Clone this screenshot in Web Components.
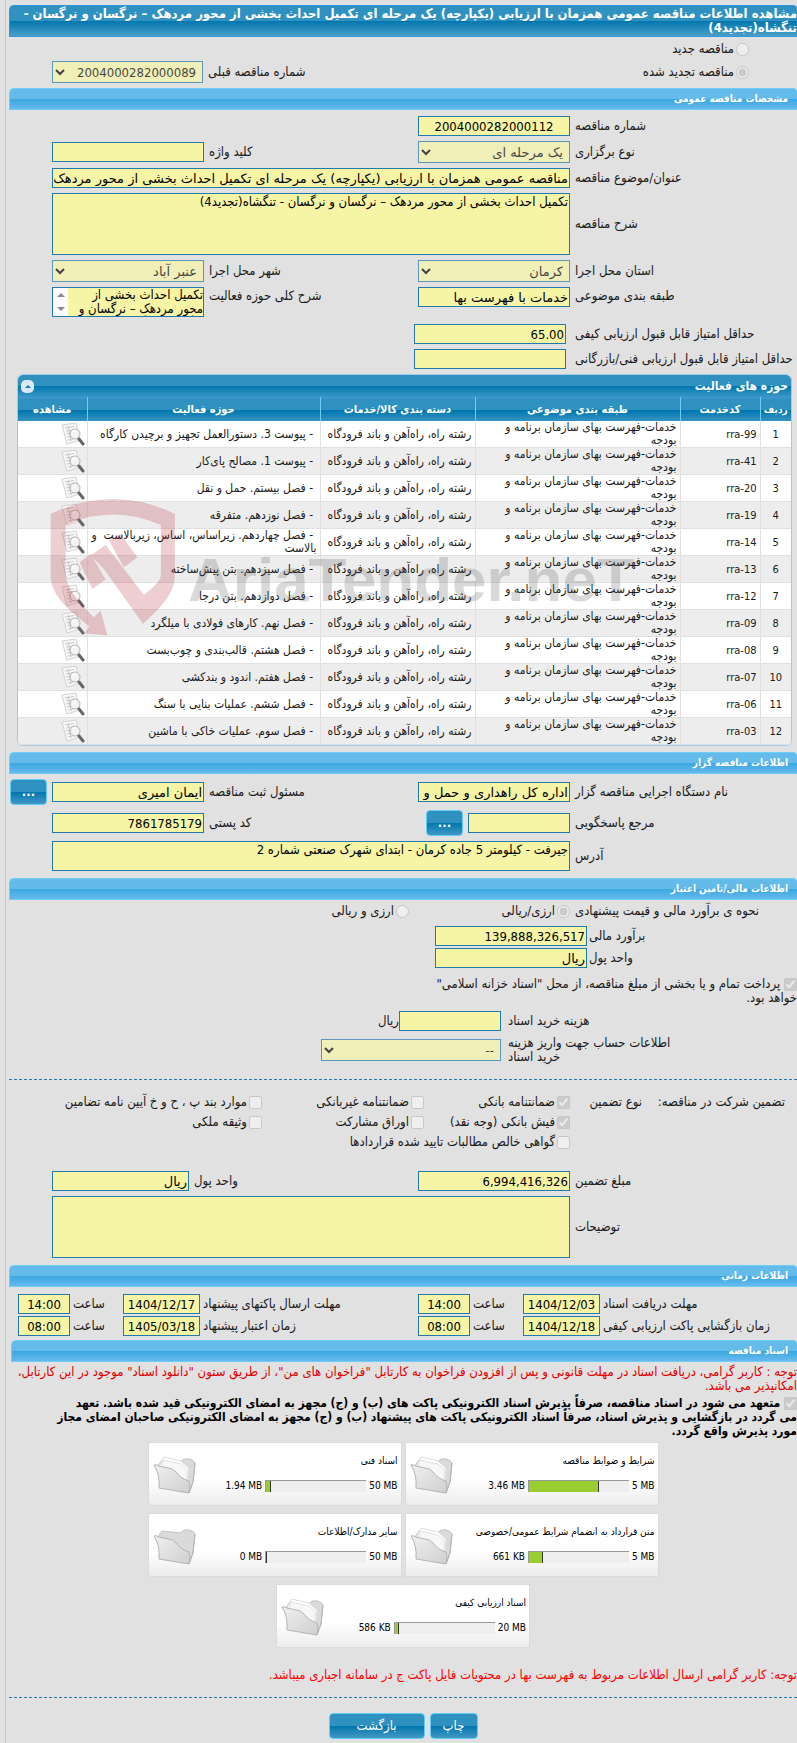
<!DOCTYPE html>
<html lang="fa" dir="rtl">
<head>
<meta charset="utf-8">
<title>مشاهده اطلاعات مناقصه عمومی</title>
<style>
  body {
    margin: 0;
    background: #e1e1e1;
    color: #1a1a1a;
    font: 13px/14px "DejaVu Sans Condensed", "DejaVu Sans", sans-serif;
  }
</style>
</head>
<body>
<tender-page></tender-page>

<script>
const controlStyles = /* css */`
  * { box-sizing: border-box; }
  input:not([type=radio]):not([type=checkbox]), select, textarea {
    width: 100%;
    margin: 0;
    font-family: inherit;
    font-size: 13px;
    color: #000;
    background: #f6f5a6;
    border: 1px solid #2279ac;
    border-radius: 0;
    outline: none;
  }
  input:not([type=radio]):not([type=checkbox]) { height: 20px; padding: 1px; }
  select { height: 22px; padding: 0 2px; }
  select:disabled { opacity: 0.7; }
  textarea {
    display: block;
    padding: 1px;
    line-height: 14px;
    resize: none;
    overflow: hidden;
  }
  label { text-align: end; align-self: center; }
`;

/* ── Section header ── */
class SectionBar extends HTMLElement {
  constructor() {
    super();
    this.attachShadow({ mode: "open" });
  }

  connectedCallback() {
    this.shadowRoot.innerHTML = /* html */`
      <style>
        :host {
          display: block;
          box-sizing: border-box;
          color: #fff;
          font-weight: bold;
          font-size: 10px;
          line-height: 20px;
          padding-right: 9px;
          border: 1px solid #6dcff6;
          border-right: 0;
          border-radius: 5px 4px 0 0;
          background: linear-gradient(#64bbea 50%, #3aa7e1 50%, #66b9ec);
        }
        :host([main]) {
          font-size: 13px;
          line-height: 14px;
          padding: 1px 0;
          border-color: #2f95df;
          background: linear-gradient(#2f91c0 50%, #0076ae 50%, #4c9fc9);
        }
        h1, h2 { margin: 0; font: inherit; }
      </style>
      ${this.hasAttribute("main") ? "<h1><slot></slot></h1>" : "<h2><slot></slot></h2>"}
    `;
  }
}

/* ── Grid that label and control cells fall into ── */
class FormGrid extends HTMLElement {
  constructor() {
    super();
    this.attachShadow({ mode: "open" });
  }

  connectedCallback() {
    this.shadowRoot.innerHTML = /* html */`
      <style>
        :host {
          display: grid;
          grid-template-columns: var(--cols, 222fr 152fr 204fr 152fr 38fr);
          gap: 5px;
          align-items: center;
        }
      </style>
      <slot></slot>
    `;
  }
}

/* ── Label + control; takes two cells of the grid around it ── */
class FormField extends HTMLElement {
  constructor() {
    super();
    this.attachShadow({ mode: "open" });
  }

  connectedCallback() {
    this.shadowRoot.innerHTML = /* html */`
      <style>
        ${controlStyles}
        :host { display: contents; }
        label { grid-column-start: var(--start, auto); }
        :host([top]) label, :host([top]) .control { align-self: start; }
        :host([top]) label { padding-top: 2px; }
        .control { grid-column: span var(--span, 1); min-width: 0; }
        .words { font-family: "DejaVu Sans", sans-serif; }
        input { text-align: ${this.getAttribute("align") || "start"}; }
        textarea { height: var(--height, 62px); }
        .scroll { display: flex; flex-direction: row; border: 1px solid #2279ac; }
        .scroll textarea { border: 0; height: 28px; flex: 1; padding: 0; }
        .arrows {
          display: flex;
          flex-direction: column;
          align-items: center;
          justify-content: space-between;
          width: 15px;
          padding: 5px 0;
          background: #fcfcfc;
        }
        .arrows i { border: 4px solid transparent; border-top-width: 0; border-bottom-color: #8b8b8b; }
        .arrows i + i { transform: rotate(180deg); }
      </style>
      <label for="c">${this.getAttribute("label")}</label>
      ${this.control()}
    `;
  }

  control() {
    const value = this.getAttribute("value") || "";
    const words = /^[\d:,./]*$/.test(value) ? "" : "words";
    switch (this.getAttribute("kind")) {
      case "select":
        return `<div class="control ${words}"><select id="c" disabled><option>${value}</option></select></div>`;
      case "area":
        return `<div class="control"><textarea id="c" readonly>${value}</textarea></div>`;
      case "scroll":
        return `<div class="control scroll"><textarea id="c" readonly>${value}</textarea><span class="arrows"><i></i><i></i></span></div>`;
      default:
        return `<div class="control ${words}"><input id="c" type="text" readonly value="${value}"></div>`;
    }
  }
}

/* ── Radio or tick box with its label ── */
class ChoiceOption extends HTMLElement {
  constructor() {
    super();
    this.attachShadow({ mode: "open" });
  }

  connectedCallback() {
    const type = this.getAttribute("type") || "checkbox";
    const checked = this.hasAttribute("checked") ? "checked" : "";
    this.shadowRoot.innerHTML = /* html */`
      <style>
        :host { display: flex; align-items: center; gap: 2px; }
        input { width: 13px; height: 13px; margin: 0; flex: none; }
        :host([block]) { display: block; }
        :host([block]) input { vertical-align: -3px; }
      </style>
      <input id="c" type="${type}" disabled ${checked}>
      <label for="c"><slot></slot></label>
    `;
  }
}

/* ── Blue button ── */
class BlueButton extends HTMLElement {
  constructor() {
    super();
    this.attachShadow({ mode: "open" });
  }

  connectedCallback() {
    this.shadowRoot.innerHTML = /* html */`
      <style>
        :host { display: inline-block; }
        button {
          display: block;
          width: 100%;
          height: 26px;
          padding: 0 12px;
          color: #fff;
          font: inherit;
          border: 1px solid #5fcdf5;
          border-radius: 4px;
          background: linear-gradient(#2f91c0 50%, #0076ae 50%, #4398c4);
        }
        :host([dots]) button { font-weight: bold; padding: 0; }
      </style>
      <button type="button"><slot></slot></button>
    `;
  }
}

/* ── Activity table ── */
const activities = [
  ["rra-99", "پیوست 3. دستورالعمل تجهیز و برچیدن کارگاه"],
  ["rra-41", "پیوست 1. مصالح پای‌کار"],
  ["rra-20", "فصل بیستم. حمل و نقل"],
  ["rra-19", "فصل نوزدهم. متفرقه"],
  ["rra-14", "فصل چهاردهم. زیراساس، اساس، زیربالاست &nbsp;و بالاست"],
  ["rra-13", "فصل سیزدهم. بتن پیش‌ساخته"],
  ["rra-12", "فصل دوازدهم. بتن درجا"],
  ["rra-09", "فصل نهم. کارهای فولادی با میلگرد"],
  ["rra-08", "فصل هشتم. قالب‌بندی و چوب‌بست"],
  ["rra-07", "فصل هفتم. اندود و بندکشی"],
  ["rra-06", "فصل ششم. عملیات بنایی با سنگ"],
  ["rra-03", "فصل سوم. عملیات خاکی با ماشین"],
];

const lensIcon = /* html */`
  <svg width="24" height="24" viewBox="0 0 24 24">
    <path d="M1 3 15 1l4 17-13 4Z" fill="#f8f8f8" stroke="#d2d2d2"/>
    <path d="m4 6 9-1.500M5 9l8-1.500M5 12l6-1M6 15l5-1M7 18l5-1M7 4l3 15" stroke="#c8c8c8" fill="none"/>
    <circle cx="14" cy="12" r="5" fill="#f2f2f2" fill-opacity=".8" stroke="#b5b5b5"/>
    <path d="M11 11q1-3 4-2" stroke="#fff" fill="none"/>
    <path d="m18 17 4 5" stroke="#666" stroke-width="3" stroke-linecap="round"/>
  </svg>`;

class ActivityTable extends HTMLElement {
  constructor() {
    super();
    this.attachShadow({ mode: "open" });
  }

  connectedCallback() {
    this.shadowRoot.innerHTML = /* html */`
      <style>
        :host {
          display: block;
          position: relative;
          border: 1px solid #a3c9e6;
          border-radius: 6px;
          overflow: hidden;
          background: #fff;
          font-size: 12px;
          line-height: 13px;
        }
        .title {
          display: flex;
          justify-content: space-between;
          align-items: center;
          height: 22px;
          padding: 0 3px;
          color: #fff;
          font-weight: bold;
          background: linear-gradient(#2f91c0 50%, #0076ae 50%, #3b97c5);
        }
        .fold {
          width: 13px;
          height: 13px;
          padding: 0;
          border: 0;
          border-radius: 5px;
          background: #dbe8f5;
          display: grid;
          place-items: center;
        }
        .fold i { border: 3px solid transparent; border-top: 0; border-bottom-color: #1a7ab0; }
        table {
          width: 100%;
          border-collapse: collapse;
          table-layout: fixed;
        }
        th {
          height: 23px;
          padding: 0;
          color: #fff;
          border-left: 1px solid #6dcff6;
          font-size: 11px;
          white-space: nowrap;
        }
        th:first-child { font-size: 10px; }
        thead tr {
          background: linear-gradient(#2f91c0 50%, #0076ae 50%, #3b97c5);
          border-top: 1px solid #3d94d8;
        }
        td {
          height: 26px;
          padding: 0 3px;
          border-left: 1px solid #e0e0e0;
          border-bottom: 1px solid #e0e0e0;
        }
        th:last-child, td:last-child { border-left: 0; }
        tbody tr:nth-child(even) { background: #ededed; }
        td:nth-child(-n+2) { font-size: 11px; }
        td:first-child { text-align: center; }
        td:nth-child(3) { padding-left: 16px; }
        td:last-child { padding: 0 2px; }
        .look { display: block; padding: 0; border: 0; background: none; height: 24px; }
        .mark {
          position: absolute;
          left: 32px;
          top: 122px;
          opacity: 0.22;
          pointer-events: none;
        }
      </style>
      <div class="title">
        <span>حوزه های فعالیت</span>
        <button class="fold" type="button" aria-label="بستن"><i></i></button>
      </div>
      <table>
        <colgroup>
          <col style="width:31px"><col style="width:80px"><col style="width:205px">
          <col style="width:155px"><col><col style="width:69px">
        </colgroup>
        <thead>
          <tr>
            <th>ردیف</th><th>کدخدمت</th><th>طبقه بندی موضوعی</th>
            <th>دسته بندی کالا/خدمات</th><th>حوزه فعالیت</th><th>مشاهده</th>
          </tr>
        </thead>
        <tbody>
          ${activities.map(([code, name], i) => `
            <tr>
              <td>${i + 1}</td>
              <td><bdi>${code}</bdi></td>
              <td>خدمات-فهرست بهای سازمان برنامه و بودجه</td>
              <td>رشته راه، راه‌آهن و باند فرودگاه</td>
              <td>&nbsp;- ${name}</td>
              <td><button class="look" type="button" aria-label="مشاهده">${lensIcon}</button></td>
            </tr>`).join("")}
        </tbody>
      </table>
      <svg class="mark" width="600" height="140" viewBox="0 0 600 140" direction="ltr">
        <g fill="#b5252f" transform="scale(.333) translate(-28 -24)">
          <path d="M30 75Q120 30 217 30T403 75V260C403 320 350 365 307 405L190 240 150 200 195 168 310 318C335 295 361 280 361 255V108Q215 45 75 108V255C78 300 120 345 160 385L180 365 200 440 132 433 146 412C90 370 30 320 30 262Z"/>
          <path d="m117 220 33-25 45 77-40 28ZM205 155l35-20 50 70-40 30Z"/>
        </g>
        <text x="138" y="104" font-family="Liberation Sans, sans-serif" font-weight="bold" font-size="62" fill="#555">AriaTender.neT</text>
      </svg>
    `;
  }
}

/* ── Folder card with its quota bar ── */
class FolderCard extends HTMLElement {
  constructor() {
    super();
    this.attachShadow({ mode: "open" });
  }

  connectedCallback() {
    const pages = this.hasAttribute("empty") ? "" : `
      <path d="M6 12 12 1l17 4 8 7-2 22Z" fill="#fff" stroke="#dcdcdc"/>
      <path d="m9 11 2-7 18 4 6 5v10" fill="#f7f7f7" stroke="#e2e2e2"/>`;
    this.shadowRoot.innerHTML = /* html */`
      <style>
        * { box-sizing: border-box; }
        :host {
          display: flex;
          box-sizing: border-box;
          width: 254px;
          height: 64px;
          padding: 8px 3px 0 3px;
          color: #000;
          font-size: 10px;
          border: 1px solid #dadada;
          background: linear-gradient(#fff 60%, #ececec);
        }
        .info { flex: 1; display: flex; flex-direction: column; gap: 11px; padding-top: 3px; }
        .quota { display: flex; align-items: center; gap: 3px; white-space: nowrap; direction: ltr; justify-content: flex-end; }
        .bar {
          width: 101px;
          height: 12px;
          border-top: 1px solid #999;
          border-left: 1px solid #999;
          background: #eee;
        }
        .bar div { height: 11px; background: #9acd32; border-right: 1px solid #333; }
        svg { margin-top: 5px; }
      </style>
      <div class="info">
        <div><slot></slot></div>
        <div class="quota">
          <span>${this.getAttribute("used")}</span>
          <div class="bar"><div style="width:${this.getAttribute("fill")}"></div></div>
          <span>${this.getAttribute("total")}</span>
        </div>
      </div>
      <svg width="44" height="39" viewBox="0 0 44 39">
        <defs>
          <linearGradient id="g" x2="1" y2="1"><stop stop-color="#f0f0f0"/><stop offset="1" stop-color="#cfcfcf"/></linearGradient>
        </defs>
        <path d="m6 10 4-6 19 2q2-4 8-3 5 1 6 4l-2 19-4 11Z" fill="#dadada" stroke="#c2c2c2"/>
        ${pages}
        <path d="M2 9q2-1 5 1l9 2q5 0 8 4 4 6 13 9 2 5 0 12L7 32Q8 18 2 9Z" fill="url(#g)" stroke="#b4b4b4"/>
        <path d="m37 37 4-11 2-19" fill="none" stroke="#b4b4b4"/>
      </svg>
    `;
  }
}

/* ── Page ── */
class TenderPage extends HTMLElement {
  constructor() {
    super();
    this.attachShadow({ mode: "open" });
  }

  connectedCallback() {
    this.shadowRoot.innerHTML = /* html */`
      <style>
        ${controlStyles}
        :host {
          display: block;
          margin-left: 5px;
          padding: 5px 0 5px 3px;
          border-left: 1px solid #c6c6c6;
        }
        .previous { --cols: 136fr 275fr 171fr 152fr 38fr; padding: 5px 0; }
        .previous choice-option { grid-column: 1 / 3; padding-right: 48px; }
        .general { padding: 6px 0 7px; }
        .scores { --cols: 222fr 152fr 396fr; column-gap: 9px; row-gap: 5px; }
        .wide { --span: 3; }
        activity-table { margin: 5px 5px 6px 8px; }
        .owner { padding: 5px 0 7px; }
        .owner .address { --height: 30px; }
        .pair { display: flex; gap: 5px; align-items: center; }
        #ref, #fee { width: 102px; flex: none; }
        .pair blue-button, .pick { width: 37px; }
        .method { --cols: 222fr 156fr 400fr; padding: 4px 0 8px; }
        .estimate { --cols: 208fr 152fr 424fr; column-gap: 2px; row-gap: 2px; }
        .treasury { padding: 9px 0 6px; }
        .fee { --cols: 289fr 492fr; column-gap: 7px; padding-bottom: 15px; }
        .fee .pair { gap: 0; }
        .fee select { width: 180px; }
        hr { margin: 0; border: 0; border-top: 1px dashed #2279ac; }
        .kinds { --cols: 138fr 67fr 141fr 157fr 253fr; row-gap: 6px; padding: 15px 12px 22px 0; }
        .from-third { grid-column-start: 3; }
        .receivables { grid-column: 3 / 5; }
        .amount { --cols: 222fr 152fr 219fr 137fr 38fr; padding-bottom: 5px; }
        .notes { padding-bottom: 7px; }
        .times {
          --cols: 194fr 77fr 47fr 52fr 212fr 77fr 47fr 52fr 6fr;
          column-gap: 3px;
          row-gap: 2px;
          padding: 7px 0 4px;
        }
        p { margin: 0; }
        .files { margin-left: 2px; }
        .notice { color: #e00000; padding: 3px 0; }
        .pledge { font-weight: bold; font-size: 12px; color: #000; }
        .cards {
          display: flex;
          flex-wrap: wrap;
          justify-content: center;
          gap: 7px 3px;
          max-width: 520px;
          margin: 4px auto 20px;
        }
        .last { color: #f00; padding-bottom: 15px; }
        .actions { display: flex; justify-content: center; gap: 5px; padding-top: 15px; }
        .back { width: 96px; }
        .print { width: 48px; }
      </style>

      <section-bar main>مشاهده اطلاعات مناقصه عمومی همزمان با ارزیابی (یکپارچه) یک مرحله ای تکمیل احداث بخشی از محور مردهک – نرگسان و نرگسان -<br>تنگشاه(تجدید4)</section-bar>

      <form-grid class="previous">
        <choice-option type="radio">مناقصه جدید</choice-option>
        <choice-option type="radio" checked>مناقصه تجدید شده</choice-option>
        <form-field label="شماره مناقصه قبلی" kind="select" value="2004000282000089"></form-field>
      </form-grid>

      <section-bar>مشخصات مناقصه عمومی</section-bar>
      <form-grid class="general">
        <form-field label="شماره مناقصه" value="2004000282000112" align="center"></form-field>
        <form-field label="نوع برگزاری" kind="select" value="یک مرحله ای" style="--start:1"></form-field>
        <form-field label="کلید واژه"></form-field>
        <form-field class="wide" label="عنوان/موضوع مناقصه" style="--start:1" value="مناقصه عمومی همزمان با ارزیابی (یکپارچه) یک مرحله ای تکمیل احداث بخشی از محور مردهک – نرگسان و نرگسان - تنگشاه(تجدید4)"></form-field>
        <form-field class="wide" label="شرح مناقصه" kind="area" style="--start:1" value="تکمیل احداث بخشی از محور مردهک – نرگسان و نرگسان - تنگشاه(تجدید4)"></form-field>
        <form-field label="استان محل اجرا" kind="select" value="کرمان" style="--start:1"></form-field>
        <form-field label="شهر محل اجرا" kind="select" value="عنبر آباد"></form-field>
        <form-field top label="طبقه بندی موضوعی" value="خدمات با فهرست بها" style="--start:1"></form-field>
        <form-field top label="شرح کلی حوزه فعالیت" kind="scroll" value="تکمیل احداث بخشی از محور مردهک – نرگسان و نرگسان - تنگشاه(تجدید4)"></form-field>
      </form-grid>
      <form-grid class="scores">
        <form-field label="حداقل امتیاز قابل قبول ارزیابی کیفی" value="65.00"></form-field>
        <form-field label="حداقل امتیاز قابل قبول ارزیابی فنی/بازرگانی" style="--start:1"></form-field>
      </form-grid>

      <activity-table></activity-table>

      <section-bar>اطلاعات مناقصه گزار</section-bar>
      <form-grid class="owner">
        <form-field label="نام دستگاه اجرایی مناقصه گزار" value="اداره کل راهداری و حمل و نقل جاده ای"></form-field>
        <form-field label="مسئول ثبت مناقصه" value="ایمان امیری"></form-field>
        <blue-button dots class="pick">...</blue-button>
        <label for="ref">مرجع پاسخگویی</label>
        <div class="pair">
          <input id="ref" type="text" readonly>
          <blue-button dots>...</blue-button>
        </div>
        <form-field label="کد پستی" value="7861785179"></form-field>
        <form-field class="wide address" label="آدرس" kind="area" style="--start:1" value="جیرفت - کیلومتر 5 جاده کرمان - ابتدای شهرک صنعتی شماره 2"></form-field>
      </form-grid>

      <section-bar>اطلاعات مالی/تامین اعتبار</section-bar>
      <form-grid class="method">
        <label>نحوه ی برآورد مالی و قیمت پیشنهادی</label>
        <choice-option type="radio" checked>ارزی/ریالی</choice-option>
        <choice-option type="radio">ارزی و ریالی</choice-option>
      </form-grid>
      <form-grid class="estimate">
        <form-field label="برآورد مالی" value="139,888,326,517"></form-field>
        <form-field label="واحد پول" value="ریال" style="--start:1"></form-field>
      </form-grid>
      <choice-option block checked class="treasury">پرداخت تمام و یا بخشی از مبلغ مناقصه، از محل "اسناد خزانه اسلامی"<br>خواهد بود.</choice-option>
      <form-grid class="fee">
        <label for="fee">هزینه خرید اسناد</label>
        <div class="pair"><input id="fee" type="text" readonly><span>ریال</span></div>
        <label for="account">اطلاعات حساب جهت واریز هزینه<br>خرید اسناد</label>
        <select id="account" disabled><option>--</option></select>
      </form-grid>

      <hr>
      <form-grid class="kinds">
        <span>تضمین شرکت در مناقصه:</span>
        <span>نوع تضمین</span>
        <choice-option checked>ضمانتنامه بانکی</choice-option>
        <choice-option>ضمانتنامه غیربانکی</choice-option>
        <choice-option>موارد بند پ ، ح و خ آیین نامه تضامین</choice-option>
        <choice-option checked class="from-third">فیش بانکی (وجه نقد)</choice-option>
        <choice-option>اوراق مشارکت</choice-option>
        <choice-option>وثیقه ملکی</choice-option>
        <choice-option class="receivables">گواهی خالص مطالبات تایید شده قراردادها</choice-option>
      </form-grid>
      <form-grid class="amount">
        <form-field label="مبلغ تضمین" value="6,994,416,326"></form-field>
        <form-field label="واحد پول" value="ریال"></form-field>
      </form-grid>
      <form-grid class="notes">
        <form-field class="wide" label="توضیحات" kind="area"></form-field>
      </form-grid>

      <section-bar>اطلاعات زمانی</section-bar>
      <form-grid class="times">
        <form-field label="مهلت دریافت اسناد" value="1404/12/03" align="center"></form-field>
        <form-field label="ساعت" value="14:00" align="center"></form-field>
        <form-field label="مهلت ارسال پاکتهای پیشنهاد" value="1404/12/17" align="center"></form-field>
        <form-field label="ساعت" value="14:00" align="center"></form-field>
        <form-field label="زمان بازگشایی پاکت ارزیابی کیفی" value="1404/12/18" align="center" style="--start:1"></form-field>
        <form-field label="ساعت" value="08:00" align="center"></form-field>
        <form-field label="زمان اعتبار پیشنهاد" value="1405/03/18" align="center"></form-field>
        <form-field label="ساعت" value="08:00" align="center"></form-field>
      </form-grid>

      <section-bar class="files">اسناد مناقصه</section-bar>
      <p class="notice">توجه : کاربر گرامی، دریافت اسناد در مهلت قانونی و پس از افزودن فراخوان به کارتابل "فراخوان های من"، از طریق ستون "دانلود اسناد" موجود در این کارتابل،<br>امکانپذیر می باشد.</p>
      <choice-option block checked class="pledge">متعهد می شود در اسناد مناقصه، صرفاً پذیرش اسناد الکترونیکی پاکت های (ب) و (ج) مجهز به امضای الکترونیکی قید شده باشد. تعهد<br>می گردد در بازگشایی و پذیرش اسناد، صرفاً اسناد الکترونیکی پاکت های پیشنهاد (ب) و (ج) مجهز به امضای الکترونیکی صاحبان امضای مجاز<br>مورد پذیرش واقع گردد.</choice-option>

      <div class="cards">
        <folder-card used="3.46 MB" total="5 MB" fill="70%">شرایط و ضوابط مناقصه</folder-card>
        <folder-card used="1.94 MB" total="50 MB" fill="5%">اسناد فنی</folder-card>
        <folder-card used="661 KB" total="5 MB" fill="14%">متن قرارداد به انضمام شرایط عمومی/خصوصی</folder-card>
        <folder-card used="0 MB" total="50 MB" fill="1%" empty>سایر مدارک/اطلاعات</folder-card>
        <folder-card used="586 KB" total="20 MB" fill="4%">اسناد ارزیابی کیفی</folder-card>
      </div>

      <p class="last">توجه: کاربر گرامی ارسال اطلاعات مربوط به فهرست بها در محتویات فایل پاکت ج در سامانه اجباری میباشد.</p>
      <hr>
      <div class="actions">
        <blue-button class="print">چاپ</blue-button>
        <blue-button class="back">بازگشت</blue-button>
      </div>
    `;
  }
}

customElements.define("section-bar", SectionBar);
customElements.define("form-grid", FormGrid);
customElements.define("form-field", FormField);
customElements.define("choice-option", ChoiceOption);
customElements.define("blue-button", BlueButton);
customElements.define("activity-table", ActivityTable);
customElements.define("folder-card", FolderCard);
customElements.define("tender-page", TenderPage);
</script>
</body>
</html>
